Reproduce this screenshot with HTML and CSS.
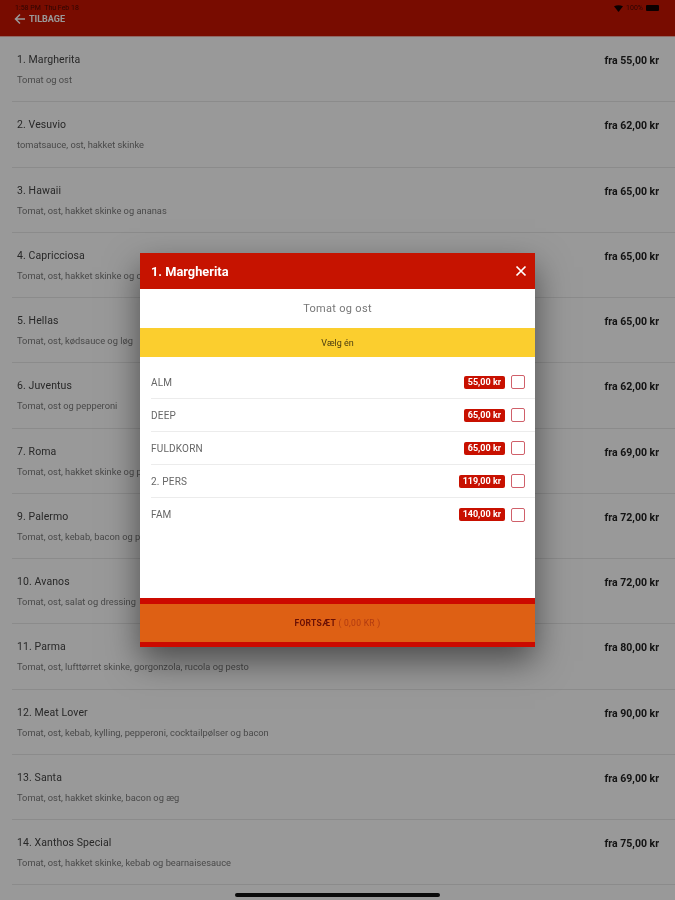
FILE: index.html
```html
<!DOCTYPE html>
<html lang="da">
<head>
  <meta charset="UTF-8">
  <title>Menu</title>
  <link rel="stylesheet" href="styles.css">
</head>
<body>
  <div class="page">
    <header class="topbar">
      <div class="status">
        <span class="status-time">1:58 PM &nbsp;Thu Feb 18</span>
        <span class="status-right">
          <svg class="wifi" viewBox="0 0 12 9"><path d="M0 1.5Q6 -1.5 12 1.5L6 9Z"/></svg>
          <span>100%</span>
          <span class="battery"></span>
        </span>
      </div>
      <div class="back">
        <svg class="back-arrow" viewBox="0 0 12 12"><path d="M11 6H2M6 1.5L1.5 6L6 10.5"/></svg>
        <span>TILBAGE</span>
      </div>
    </header>

    <ul class="menu">
      <li class="item"><div><div class="item-name">1. Margherita</div><div class="item-desc">Tomat og ost</div></div><div class="item-price">fra 55,00 kr</div></li>
      <li class="item"><div><div class="item-name">2. Vesuvio</div><div class="item-desc">tomatsauce, ost, hakket skinke</div></div><div class="item-price">fra 62,00 kr</div></li>
      <li class="item"><div><div class="item-name">3. Hawaii</div><div class="item-desc">Tomat, ost, hakket skinke og ananas</div></div><div class="item-price">fra 65,00 kr</div></li>
      <li class="item"><div><div class="item-name">4. Capricciosa</div><div class="item-desc">Tomat, ost, hakket skinke og champignon</div></div><div class="item-price">fra 65,00 kr</div></li>
      <li class="item"><div><div class="item-name">5. Hellas</div><div class="item-desc">Tomat, ost, kødsauce og løg</div></div><div class="item-price">fra 65,00 kr</div></li>
      <li class="item"><div><div class="item-name">6. Juventus</div><div class="item-desc">Tomat, ost og pepperoni</div></div><div class="item-price">fra 62,00 kr</div></li>
      <li class="item"><div><div class="item-name">7. Roma</div><div class="item-desc">Tomat, ost, hakket skinke og pepperoni</div></div><div class="item-price">fra 69,00 kr</div></li>
      <li class="item"><div><div class="item-name">9. Palermo</div><div class="item-desc">Tomat, ost, kebab, bacon og pepperoni</div></div><div class="item-price">fra 72,00 kr</div></li>
      <li class="item"><div><div class="item-name">10. Avanos</div><div class="item-desc">Tomat, ost, salat og dressing</div></div><div class="item-price">fra 72,00 kr</div></li>
      <li class="item"><div><div class="item-name">11. Parma</div><div class="item-desc">Tomat, ost, lufttørret skinke, gorgonzola, rucola og pesto</div></div><div class="item-price">fra 80,00 kr</div></li>
      <li class="item"><div><div class="item-name">12. Meat Lover</div><div class="item-desc">Tomat, ost, kebab, kylling, pepperoni, cocktailpølser og bacon</div></div><div class="item-price">fra 90,00 kr</div></li>
      <li class="item"><div><div class="item-name">13. Santa</div><div class="item-desc">Tomat, ost, hakket skinke, bacon og æg</div></div><div class="item-price">fra 69,00 kr</div></li>
      <li class="item"><div><div class="item-name">14. Xanthos Special</div><div class="item-desc">Tomat, ost, hakket skinke, kebab og bearnaisesauce</div></div><div class="item-price">fra 75,00 kr</div></li>
    </ul>

    <div class="overlay">
      <div class="modal">
        <div class="modal-head">
          <span>1. Margherita</span>
          <svg class="close" viewBox="0 0 12 12"><path d="M1.5 1.5L10.5 10.5M10.5 1.5L1.5 10.5"/></svg>
        </div>
        <div class="modal-desc">Tomat og ost</div>
        <div class="modal-pick">Vælg én</div>
        <div class="options">
          <div class="option"><span class="option-name">ALM</span><span class="tag">55,00 kr</span><span class="check"></span></div>
          <div class="option"><span class="option-name">DEEP</span><span class="tag">65,00 kr</span><span class="check"></span></div>
          <div class="option"><span class="option-name">FULDKORN</span><span class="tag">65,00 kr</span><span class="check"></span></div>
          <div class="option"><span class="option-name">2. PERS</span><span class="tag">119,00 kr</span><span class="check"></span></div>
          <div class="option"><span class="option-name">FAM</span><span class="tag">140,00 kr</span><span class="check"></span></div>
        </div>
        <div class="modal-foot"><b>FORTSÆT</b>&nbsp;<span class="foot-sum">( 0,00 KR )</span></div>
      </div>
    </div>

    <div class="home-bar"></div>
  </div>
</body>
</html>
```

FILE: styles.css
```css
html, body { margin: 0; padding: 0; }
body { font-family: Roboto, "Liberation Sans", sans-serif; background: #fff; }
.page { position: relative; width: 675px; height: 900px; overflow: hidden; background: #fff; filter: blur(0.6px); }

.topbar { height: 36px; background: #c81400; border-bottom: 1px solid #f0b0a8; color: #fff; }
.status { display: flex; justify-content: space-between; align-items: center; height: 14px; padding: 1px 16px 0 15px; font-size: 7px; color: #4a0a05; }
.status-right { display: flex; align-items: center; gap: 3px; }
.wifi { width: 9px; height: 7px; fill: #150000; }
.battery { width: 13px; height: 6px; background: #150000; border-radius: 1px; }
.back { display: flex; align-items: center; gap: 3px; padding-left: 14px; margin-top: -2px; font-size: 9px; font-weight: 700; }
.back-arrow { width: 12px; height: 12px; fill: none; stroke: #fff; stroke-width: 1.5; }

.menu { list-style: none; margin: 0; padding: 0 0 0 12px; }
.item { display: flex; justify-content: space-between; height: 65.25px; box-sizing: border-box; padding: 16px 16px 0 5px; border-bottom: 1px solid #e8e8e8; }
.item-name { font-size: 10.5px; line-height: 13px; color: #444; letter-spacing: 0.1px; }
.item-desc { margin-top: 8px; font-size: 9.3px; line-height: 11px; color: #7a7a7a; }
.item-price { margin-top: 1px; font-size: 10.5px; line-height: 13px; font-weight: 700; color: #222; }

.overlay { position: absolute; inset: 0; background: rgba(0, 0, 0, 0.4); }
.modal { position: absolute; left: 140px; top: 253px; width: 395px; height: 394px; display: flex; flex-direction: column; background: #fff; box-shadow: 0 14px 32px rgba(0, 0, 0, 0.5); }
.modal-head { display: flex; justify-content: space-between; align-items: center; height: 36px; flex: none; padding: 0 8px 0 11px; background: #c61300; color: #fff; font-size: 12.8px; font-weight: 700; }
.close { width: 12px; height: 12px; fill: none; stroke: #fff; stroke-width: 1.7; }
.modal-desc { height: 39px; flex: none; display: flex; align-items: center; justify-content: center; font-size: 11px; letter-spacing: 0.3px; color: #777; }
.modal-pick { height: 29px; flex: none; display: flex; align-items: center; justify-content: center; background: #fbce2e; font-size: 9px; color: #4a3c10; }
.options { flex: 1; padding-top: 9px; }
.option { display: flex; align-items: center; height: 33px; box-sizing: border-box; margin-left: 11px; padding-right: 10px; border-bottom: 1px solid #ececec; }
.option:last-child { border-bottom: none; }
.option-name { flex: 1; font-size: 10px; letter-spacing: 0.2px; color: #666; }
.tag { padding: 0 4px; height: 13px; line-height: 13px; border-radius: 2px; background: #c81000; color: #fff; font-size: 9px; font-weight: 700; }
.check { width: 14px; height: 14px; margin-left: 6px; box-sizing: border-box; border: 1px solid #d0606a; border-radius: 2px; }
.modal-foot { height: 49px; box-sizing: border-box; flex: none; display: flex; align-items: center; justify-content: center; background: #de6014; border-top: 6px solid #cc0a00; border-bottom: 5px solid #cc0a00; font-size: 8.5px; color: #7a1a00; letter-spacing: 0.3px; }
.modal-foot b { color: #6a1005; }
.foot-sum { color: #b03a10; }

.home-bar { position: absolute; left: 235px; bottom: 3px; width: 205px; height: 4px; border-radius: 2px; background: #0a0a0a; }
```
